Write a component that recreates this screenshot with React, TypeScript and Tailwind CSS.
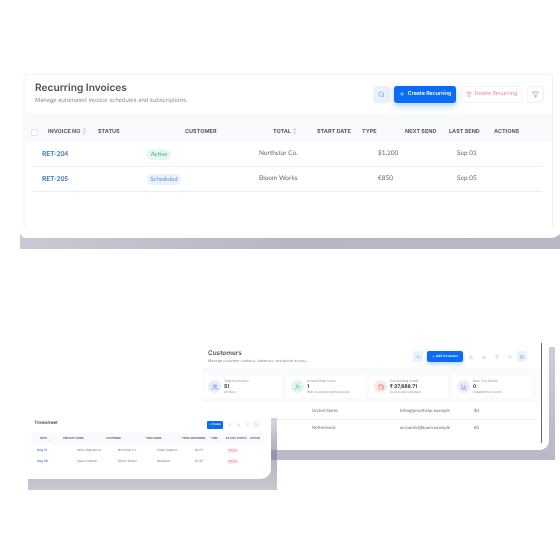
import { Plus, Search, Trash2, Users, UserCheck, Wallet, ChartColumn, Filter, Grid2x2, List, Upload, Download, ChevronUp, ChevronDown } from "lucide-react";

const font = { fontFamily: "Inter, 'Liberation Sans', sans-serif" };

function RecurringCard() {
  return (
    <div className="absolute left-[20px] top-[73px] h-[176px] w-[540px] overflow-hidden bg-gradient-to-r from-[#c9c9d4] via-[#b6b6c5] to-[#b8b8c7]">
      <div className="h-[165px] w-[544px] rounded-br-[14px] rounded-bl-[6px] bg-white pl-[3px] pr-[11px]">
        <div className="flex h-[156px] flex-col rounded-[3px] border-r border-[#eef0f2] bg-[#f8f9fa] pl-[3px] pt-[2px] blur-[0.4px]">
          <div className="flex h-[38px] items-center justify-between rounded-[4px] bg-white pl-[9px] pr-[8px]">
            <div className="mb-[1px]">
              <h1 className="text-[10.2px] leading-[15px] font-semibold text-[#4a4f59]">Recurring Invoices</h1>
              <p className="text-[5.7px] leading-[10px] text-[#8a8f98]">Manage automated invoice schedules and subscriptions.</p>
            </div>
            <div className="flex items-center gap-[5px]">
              <button className="mr-[-1px] flex h-[17px] w-[17px] items-center justify-center rounded-[4px] bg-[#e9f1fb] text-[#6b97cc]">
                <Search size={7} />
              </button>
              <button className="flex h-[17px] w-[62px] items-center justify-center gap-[3px] rounded-[3px] bg-[#0b6bf5] text-[5.3px] font-semibold text-white shadow-[0_3px_7px_rgba(11,107,245,0.3)]">
                <Plus size={6} />
                Create Recurring
              </button>
              <button className="flex h-[17px] w-[61px] items-center justify-center gap-[3px] rounded-[3px] border border-[#f5f5f7] bg-white text-[5.3px] font-medium text-[#e69bb0]">
                <Trash2 size={6} />
                Delete Recurring
              </button>
              <button className="flex h-[17px] w-[17px] items-center justify-center rounded-[4px] border border-[#eef0f3] bg-white text-[#5f8fc9]">
                <Filter size={7} />
              </button>
            </div>
          </div>
          <div className="mt-[9px] flex h-[20px] items-center rounded-t-[3px] bg-[#f8fafd] pl-[5px] text-[5.5px] font-bold text-[#555a63]">
            <span className="h-[7px] w-[7px] rounded-[1px] border border-[#dfe2e7] bg-white" />
            <span className="ml-[10px] w-[50px]">INVOICE NO <span className="text-[#c8ccd2]">↕</span></span>
            <span className="w-[87px]">STATUS</span>
            <span className="w-[88px]">CUSTOMER</span>
            <span className="w-[44px]">TOTAL <span className="text-[#c8ccd2]">↕</span></span>
            <span className="w-[45px]">START DATE</span>
            <span className="w-[43px]">TYPE</span>
            <span className="w-[44px]">NEXT SEND</span>
            <span className="w-[45px]">LAST SEND</span>
            <span>ACTIONS</span>
          </div>
          <div className="flex-1 bg-white pl-[6px] pr-[10px] text-[6.5px] text-[#666b74]" style={{ fontFamily: "Lato, sans-serif" }}>
            <Row1 no="RET-204" badge="Active" badgeClass="w-[24px] bg-[#e6f8ee] text-[#49b27c]" customer="Northstar Co." total="$1,200" date="Sep 01" />
            <Row1 no="RET-205" badge="Scheduled" badgeClass="w-[34px] bg-[#eaf3fd] text-[#5b93d2]" customer="Bloom Works" total="€850" date="Sep 05" />
          </div>
        </div>
      </div>
    </div>
  );
}

function Row1({ no, badge, badgeClass, customer, total, date }: { no: string; badge: string; badgeClass: string; customer: string; total: string; date: string }) {
  return (
    <div className="flex h-[25px] items-center border-b border-[#eceef1] pl-[10px]">
      <span className="w-[105px] text-[6.8px] font-bold text-[#3f74b8]">{no}</span>
      <span className="w-[112px]">
        <span className={`flex h-[11px] items-center justify-center rounded-full text-[6px] ${badgeClass}`}>{badge}</span>
      </span>
      <span className="w-[119px]">{customer}</span>
      <span className="w-[79px]">{total}</span>
      <span>{date}</span>
    </div>
  );
}

function Stat({ label, value, note, tone, icon }: { label: string; value: string; note: string; tone: string; icon: React.ReactNode }) {
  return (
    <div className="flex h-[23px] w-[79px] items-center gap-[3px] rounded-[2px] bg-white pl-[5px]">
      <span className={`flex h-[13px] w-[13px] items-center justify-center rounded-full ${tone}`}>{icon}</span>
      <div className="flex flex-col leading-none">
        <span className="text-[3.2px] leading-[5px] text-[#8a8f98]">{label}</span>
        <span className="text-[5px] leading-[6px] font-bold text-[#3b4048]">{value}</span>
        <span className="text-[3.2px] leading-[5px] text-[#8a8f98]">{note}</span>
      </div>
    </div>
  );
}

function CustomersCard() {
  return (
    <div className="absolute left-[202px] top-[343px] h-[117px] w-[353px] bg-[linear-gradient(to_bottom,#ffffff_4px,#cdcdd7_4px,#b8b8c7_100%)]">
      <div className="h-[107px] w-[347px] rounded-br-[9px] bg-white">
        <div className="flex h-[100px] w-[340px] flex-col border-r-[1.5px] border-[#66666c] bg-[#f9fafb] blur-[0.4px]">
          <div className="flex h-[25px] items-center justify-between bg-white pl-[6px] pr-[14px]">
            <div className="mt-[2px]">
              <h2 className="text-[6.4px] leading-[9px] font-semibold text-[#50555f]">Customers</h2>
              <p className="text-[3.7px] leading-[6px] text-[#8a8f98]">Manage customer contacts, balances, and portal access.</p>
            </div>
            <div className="mt-[2px] flex items-center gap-[3px] text-[#8aa5c8]">
              <span className="mr-[1px] flex h-[11px] w-[10px] items-center justify-center rounded-[2px] bg-[#e9f1fb]"><Search size={4} /></span>
              <span className="flex h-[11px] w-[36px] items-center justify-center gap-[1px] rounded-[2px] bg-[#0b6bf5] text-[3.2px] font-semibold text-white shadow-[0_2px_4px_rgba(11,107,245,0.3)]"><Plus size={3} />Add Customer</span>
              <span className="flex h-[11px] w-[10px] items-center justify-center rounded-[2px] bg-white"><Upload size={4} /></span>
              <span className="flex h-[11px] w-[10px] items-center justify-center rounded-[2px] bg-white"><Download size={4} /></span>
              <span className="flex h-[11px] w-[10px] items-center justify-center rounded-[2px] bg-white"><Filter size={4} /></span>
              <span className="flex h-[11px] w-[10px] items-center justify-center rounded-[2px] bg-white text-[#b5bac2]"><List size={4} /></span>
              <span className="ml-[-1px] flex h-[11px] w-[10px] items-center justify-center rounded-[2px] bg-[#e9f1fb]"><Grid2x2 size={4} /></span>
            </div>
          </div>
          <div className="mt-[7px] flex gap-[4px] pl-[1px]">
            <Stat label="Total Customers" value="51" note="All time" tone="bg-[#e3edfb] text-[#4a82d0]" icon={<Users size={6} />} />
            <Stat label="Active Portal Users" value="1" note="With customer portal access" tone="bg-[#e3f6ea] text-[#55b583]" icon={<UserCheck size={6} />} />
            <Stat label="Outstanding Credit" value="₹ 37,686.71" note="Across all customers" tone="bg-[#fde8e8] text-[#e06b6b]" icon={<Wallet size={6} />} />
            <Stat label="New This Month" value="0" note="Created this month" tone="bg-[#ecebfb] text-[#8479d6]" icon={<ChartColumn size={6} />} />
          </div>
          <div className="mt-[4px] flex-1 bg-white pt-[2px] pr-[4px] text-[4.4px] text-[#6c7079]" style={{ fontFamily: "Lato, sans-serif" }}>
            <div className="flex h-[16px] items-center border-b border-[#eef0f2] pl-[110px]">
              <span className="w-[88px]">United States</span>
              <span className="w-[74px]">billing@northstar.example</span>
              <span>$0</span>
            </div>
            <div className="flex h-[16px] items-center pl-[110px]">
              <span className="w-[88px]">Netherlands</span>
              <span className="w-[74px]">accounts@bloom.example</span>
              <span>€0</span>
            </div>
          </div>
        </div>
      </div>
    </div>
  );
}

function SheetRow({ date, project, customer, task, total }: { date: string; project: string; customer: string; task: string; total: string }) {
  return (
    <div className="flex h-[11px] items-center text-[3px] text-[#6c7079]">
      <span className="w-[46px] pl-[6px] font-semibold text-[#4a7cc0]">{date}</span>
      <span className="w-[41px]">{project}</span>
      <span className="w-[39px]">{customer}</span>
      <span className="w-[38px]">{task}</span>
      <span className="w-[32px]">{total}</span>
      <span className="flex h-[5px] w-[11px] items-center justify-center rounded-full bg-[#fde8ea] text-[2.4px] text-[#e36b7e]">Unbilled</span>
    </div>
  );
}

function TimesheetCard() {
  return (
    <div className="absolute left-[28px] top-[418px] h-[72px] w-[249px] bg-[linear-gradient(to_bottom,rgba(125,125,150,0.3),rgba(125,125,150,0.62)_45%,rgba(125,125,150,0.42))]">
      <div className="mt-[-1px] flex h-[62px] w-[243px] flex-col rounded-br-[10px] bg-white blur-[0.4px]">
        <div className="flex h-[15px] items-center justify-between pl-[6px] pr-[11px]">
          <h3 className="text-[4.6px] font-semibold text-[#4a4f59]">Timesheet</h3>
          <div className="flex items-center gap-[2px] text-[#a3a9b2]">
            <span className="mr-[1px] flex h-[8px] w-[16px] items-center justify-center rounded-[1px] bg-[#0b6bf5] text-[2.6px] font-semibold text-white">+ Create</span>
            <span className="flex h-[7px] w-[7px] items-center justify-center"><Upload size={3} /></span>
            <span className="flex h-[7px] w-[7px] items-center justify-center"><Download size={3} /></span>
            <span className="flex h-[7px] w-[7px] items-center justify-center"><Filter size={3} /></span>
            <span className="flex h-[7px] w-[7px] items-center justify-center rounded-[1px] border border-[#eceef1]"><List size={3} /></span>
          </div>
        </div>
        <div className="mt-[1px] ml-[3px] mr-[8px] flex h-[12px] items-center bg-[#f8fafd] text-[2.6px] font-semibold text-[#555a63]">
          <span className="flex w-[32px] items-center gap-[1px] pl-[9px]">DATE
            <span className="flex flex-col text-[#b9bec6]"><ChevronUp size={3} /><ChevronDown size={3} /></span>
          </span>
          <span className="w-[43px]">PROJECT NAME</span>
          <span className="w-[40px]">CUSTOMER</span>
          <span className="w-[36px]">TASK NAME</span>
          <span className="w-[29px]">TOTAL RECORDED</span>
          <span className="flex w-[15px] items-center">TIME
            <span className="flex flex-col text-[#b9bec6]"><ChevronUp size={3} /><ChevronDown size={3} /></span>
          </span>
          <span className="w-[24px]">BILLING STATUS</span>
          <span>ACTION</span>
        </div>
        <div className="ml-[3px]">
          <SheetRow date="Aug 01" project="Inbox Operations" customer="Northstar Co." task="Client Support" total="$2.00" />
          <SheetRow date="Aug 06" project="Launch Admin" customer="Bloom Works" task="Research" total="$1.45" />
        </div>
      </div>
    </div>
  );
}

export default function App() {
  return (
    <div className="relative h-[560px] w-[560px] overflow-hidden bg-white [text-rendering:geometricPrecision]" style={font}>
      <RecurringCard />
      <CustomersCard />
      <TimesheetCard />
    </div>
  );
}
